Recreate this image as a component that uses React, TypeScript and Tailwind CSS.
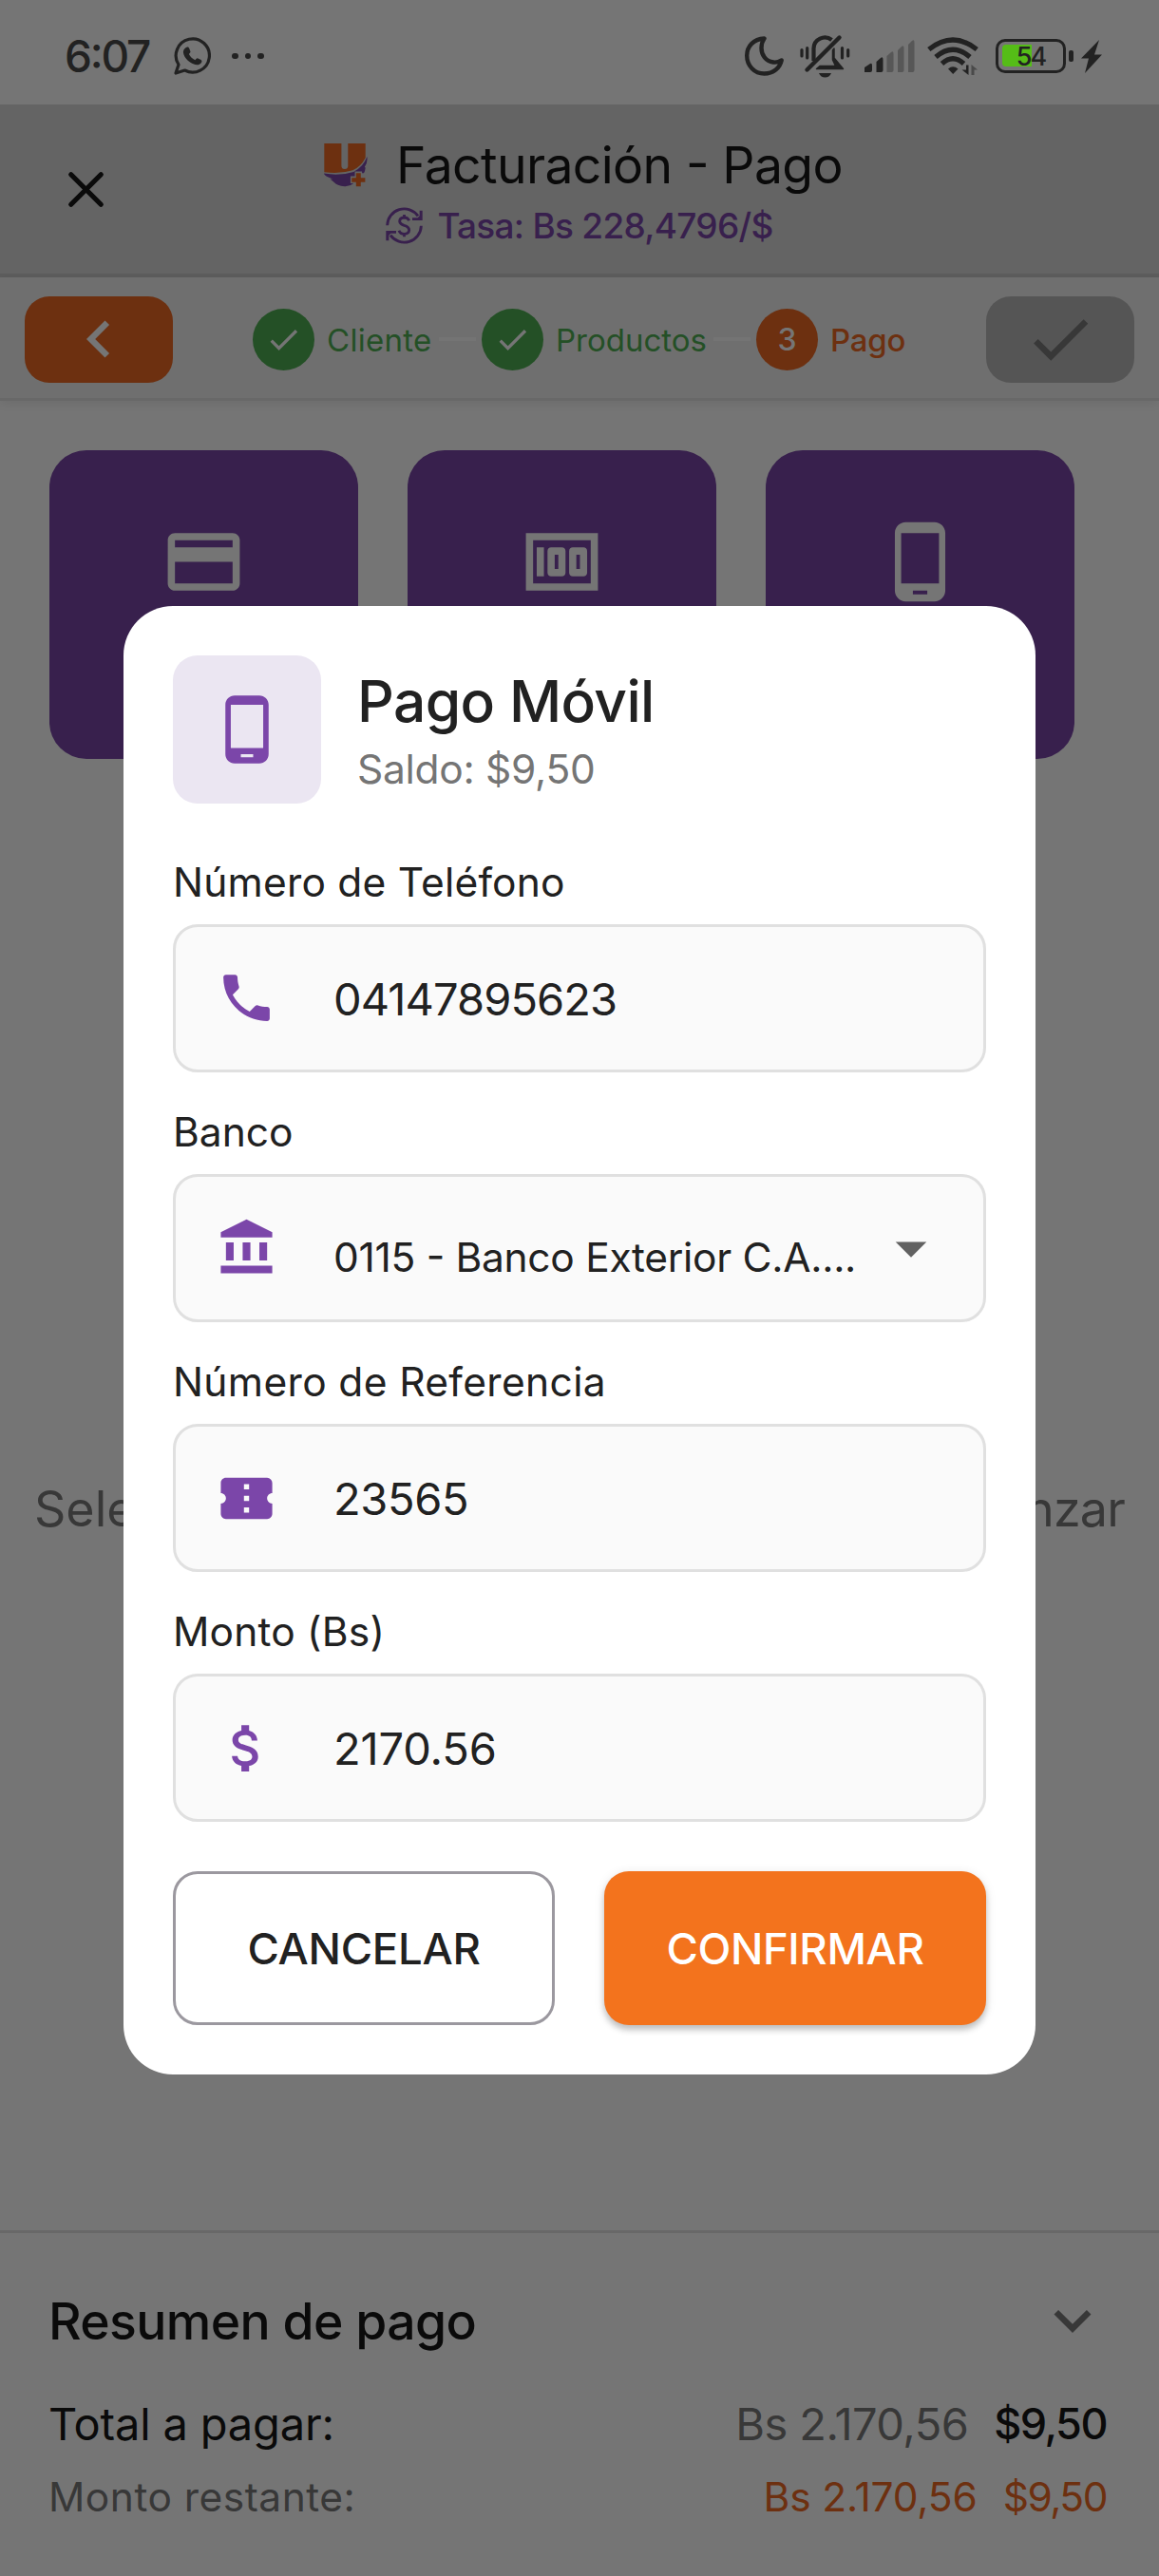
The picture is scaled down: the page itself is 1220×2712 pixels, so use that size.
import type { ReactNode } from "react";
import {
  MdArrowDropDown,
  MdAttachMoney,
  MdCheck,
  MdChevronLeft,
  MdConfirmationNumber,
  MdCreditCard,
  MdExpandMore,
  MdMoney,
  MdPhone,
  MdPhoneAndroid,
} from "react-icons/md";

function WhatsAppIcon() {
  return (
    <svg viewBox="0 0 39 40" className="ml-[26px] h-[40px] w-[39px]" fill="none">
      <path d="M2 38 5 29A17.6 17.6 0 1 1 11.5 35Z" stroke="#222" strokeWidth="3.2" strokeLinejoin="round" />
      <path
        d="M12.5 11.2c1.6-1.2 3-.9 3.6.6l1.3 3.2c.5 1.2-.8 2-1.5 3 1.5 3 3.6 4.900 6.500 6.200 1-1 1.700-2.400 3-1.800l3.200 1.600c1.200.8 1 2.400 0 3.500-2 2.200-4.800 2.300-8.200.8C14.500 25.800 11 21.500 10 16.800c-.5-2.300.9-4.600 2.500-5.600Z"
        fill="#222"
      />
    </svg>
  );
}

function MoonIcon() {
  return (
    <svg viewBox="0 0 41 42" className="h-[42px] w-[41px]" fill="none" stroke="#222" strokeWidth="4.400" strokeLinejoin="round">
      <path d="M20.500 2.500C9 3 2.200 11 2.200 20.500C2.200 31 10 39.500 20.500 39.500C30 39.500 37 33.500 38.700 25.500C36 27 33 28 30 27.500C22 26.500 17.500 20 17.500 12.500C17.500 8.500 18.700 5 20.500 2.500Z" />
    </svg>
  );
}

function BellOffIcon() {
  return (
    <svg viewBox="0 0 53 46" className="ml-[17px] h-[46px] w-[53px]" fill="none" stroke="#222">
      <g strokeWidth="3.2" strokeLinecap="round">
        <path d="M2 16.500V23M7.700 14.500V25M44.500 14.500V25M50.700 16.500V23" />
      </g>
      <path d="M14.500 28V15A11.700 11.700 0 0 1 33.500 6" strokeWidth="4.200" />
      <path d="M7.500 37.500 41.500 3.500" strokeWidth="4.400" strokeLinecap="round" />
      <path d="M36 15V25L45.500 36.500H17.500L21 33.500H37.500L34.500 27V17Z" fill="#222" strokeWidth="1.500" strokeLinejoin="round" />
      <path d="M20 41H33Q31 45.500 26.500 45.500T20 41Z" fill="#222" stroke="none" />
    </svg>
  );
}

function SignalIcon() {
  return (
    <svg viewBox="0 0 53 46" className="ml-[15px] h-[46px] w-[53px]">
      <path d="M0 40V35L6 31Q8 30 8 33V38Q8 40 6 40Z" fill="#222" />
      <path d="M12.500 40V29L17 25Q19.500 23 19.500 27V38Q19.500 40 17.500 40Z" fill="#222" />
      <path d="M23.500 40V23L28 19Q30.500 17 30.500 21V38Q30.500 40 28.500 40Z" fill="#575757" />
      <path d="M35 40V17L39 13Q41.500 11 41.500 15V38Q41.500 40 39.500 40Z" fill="#575757" />
      <path d="M46 40V11L50 7Q52.500 5 52.500 9V38Q52.500 40 50.500 40Z" fill="#575757" />
    </svg>
  );
}

function WifiIcon() {
  return (
    <svg viewBox="0 0 55 40" className="ml-[13px] h-[40px] w-[55px]" fill="none" stroke="#222" strokeWidth="5.200">
      <path d="M1.800 13Q27 -7 52.200 13" />
      <path d="M9 21Q27 5.500 45 21" />
      <path d="M15.500 28Q27 17.500 38.500 28" />
      <path d="M22 33.500Q27 29 32.500 33.500L27.200 39Z" fill="#222" stroke="none" />
      <path d="M41 29.500H43.500V40L36.500 34.500H41Z" fill="#222" stroke="none" />
      <path d="M46.500 40V29L53 34.500H49.500V40Z" fill="#4a4a4a" stroke="none" />
    </svg>
  );
}

function StatusBar() {
  return (
    <div className="flex h-[110px] items-center bg-[#757575] pl-[68px] pr-[60px] pt-[8px]">
      <span className="w-[89px] whitespace-nowrap text-[46px] font-medium leading-none tracking-[-2.2px] text-[#222]">6:07</span>
      <WhatsAppIcon />
      <div className="ml-[22px] flex gap-[7px]">
        <i className="size-[6.500px] rounded-full bg-[#222]" />
        <i className="size-[6.500px] rounded-full bg-[#222]" />
        <i className="size-[6.500px] rounded-full bg-[#222]" />
      </div>
      <div className="flex-1" />
      <MoonIcon />
      <BellOffIcon />
      <SignalIcon />
      <WifiIcon />
      <div className="relative ml-[17px] flex h-[36px] w-[74px] items-center justify-center rounded-[10px] border-[3.500px] border-[#222]">
        <div className="absolute left-[4px] top-[3px] h-[23px] w-[31px] rounded-l-[4px] bg-[#55bd17]" />
        <span className="relative text-[27px] font-medium leading-none tracking-[-2px] text-[#222]">54</span>
      </div>
      <i className="ml-[3px] h-[12px] w-[5px] rounded-[2px] bg-[#222]" />
      <svg viewBox="0 0 22 35" className="ml-[8px] h-[35px] w-[22px]" fill="#222">
        <path d="M19 0 0 19.500H8L4 35 22 15.500H14Z" />
      </svg>
    </div>
  );
}

function Logo() {
  return (
    <svg viewBox="0 0 140 141" className="h-[47px] w-[46px]">
      <path d="M1 2H56V74C56 80 60 84 66.500 84C73 84 77 80 77 74V2H133V48Q118 78 92 88Q50 101 1 94Z" fill="#6d3010" />
      <path
        d="M0 98Q50 107 95 93Q126 78 138 45Q141 62 130 78L133 80Q132 90 128 97H122V92H99V107H85V130H95Q82 141 66 140Q42 138 32 126L20 116H28L14 110Q2 106 0 98Z"
        fill="#38204d"
      />
      <path d="M103 97H118V112H132V126H118V140H103V126H89V112H103Z" fill="#6d3010" />
    </svg>
  );
}

function ExchangeIcon() {
  return (
    <svg viewBox="0 0 117 117" className="h-[39px] w-[39px]" fill="none" stroke="#38204d" strokeWidth="8.500">
      <path d="M5 58A53.500 53.500 0 0 1 102 28" />
      <path d="M112 59A53.500 53.500 0 0 1 15 89" />
      <path d="M107 11H116V42H84V34H101L107 28Z" fill="#38204d" stroke="none" />
      <path d="M10 106H1V75H33V83H16L10 89Z" fill="#38204d" stroke="none" />
      <path d="M74 43Q70 33 58.500 33Q44 34 44 45Q45 54 58.500 58Q74 62 74 73Q73 84 58.500 85Q46 85 42 74M58.500 24V33M58.500 84V94" />
    </svg>
  );
}

/* Hyphen aligned to the middle of the capitals. */
function CapDash() {
  return <span className="[font-feature-settings:'case'_1]">-</span>;
}

function Header() {
  return (
    <div className="grid h-[182px] grid-cols-[183px_1fr_183px] border-b-[4px] border-[#5d5d5d] bg-[#646464]">
      <div className="pl-[59px] pt-[58px]">
        <svg viewBox="0 0 24 24" className="size-[63px]" stroke="#0a0a0a" strokeWidth="2" strokeLinecap="round">
          <path d="M6 6 18 18M18 6 6 18" />
        </svg>
      </div>
      <div className="flex flex-col items-center pt-[31.500px]">
        <div className="flex h-[64px] items-center gap-[30px] pl-[8px]">
          <Logo />
          <span className="whitespace-nowrap text-[53.500px] leading-[64px] tracking-[-0.63px] text-[#0a0a0a]">
            Facturación <CapDash /> Pago
          </span>
        </div>
        <div className="flex h-[64px] items-center gap-[15px]">
          <ExchangeIcon />
          <span className="whitespace-nowrap text-[37px] font-medium leading-[64px] tracking-[-0.73px] text-[#38204d]">
            Tasa: Bs 228,4796/$
          </span>
        </div>
      </div>
    </div>
  );
}

function StepBar() {
  return (
    <div className="relative flex h-[130px] items-center border-b-[3px] border-[#686868] bg-[#6f6f6f] px-[26px] pt-[3px] shadow-[0_3px_10px_rgba(0,0,0,0.07)]">
      <div className="flex h-[91px] w-[156px] items-center justify-center rounded-[26px] bg-[#6d3010]">
        <MdChevronLeft className="size-[78px] text-[#757575]" />
      </div>
      <div className="flex flex-1 items-center pl-[84px]">
        <div className="flex size-[65px] items-center justify-center rounded-full bg-[#245026]">
          <MdCheck className="size-[39px] text-[#757575]" />
        </div>
        <span className="ml-[13px] w-[111px] whitespace-nowrap pt-[3px] text-[33px] tracking-[0.28px] text-[#245026]">Cliente</span>
        <i className="ml-[7px] h-[4px] w-[39px] bg-[#747474]" />
        <div className="ml-[6px] flex size-[65px] items-center justify-center rounded-full bg-[#245026]">
          <MdCheck className="size-[39px] text-[#757575]" />
        </div>
        <span className="ml-[13px] w-[160px] whitespace-nowrap pt-[3px] text-[33px] text-[#245026]">Productos</span>
        <i className="ml-[6px] h-[4px] w-[39px] bg-[#747474]" />
        <div className="ml-[6px] flex size-[65px] items-center justify-center rounded-full bg-[#6d3010] pt-[2px] text-[32px] font-medium text-[#757575]">
          3
        </div>
        <span className="ml-[13px] whitespace-nowrap pt-[3px] text-[33px] font-medium tracking-[-0.24px] text-[#6d3010]">Pago</span>
      </div>
      <div className="flex h-[91px] w-[156px] items-center justify-center rounded-[26px] bg-[#555]">
        <MdCheck className="size-[78px] text-[#383838]" />
      </div>
    </div>
  );
}

function MethodCard({ children }: { children: ReactNode }) {
  return <div className="flex size-[325px] justify-center rounded-[39px] bg-[#38204d] pt-[72px] text-[91px] text-[#757575]">{children}</div>;
}

function BankIcon() {
  return (
    <svg viewBox="0 0 24 24" fill="currentColor" className="size-[65px]">
      <path d="M12 1 2 6v2h20V6zM4 10h3v7H4zM10.500 10h3v7h-3zM17 10h3v7h-3zM2 19h20v3H2z" />
    </svg>
  );
}

function Field({ label, icon, children }: { label: ReactNode; icon: ReactNode; children: ReactNode }) {
  return (
    <div className="flex flex-col gap-[18px]">
      <div className="h-[53px] whitespace-nowrap text-[42.500px] leading-[53px]">{label}</div>
      <div className="flex h-[156px] items-center rounded-[26px] border-[3px] border-[#e0e0e0] bg-[#fafafa] pl-[42px] pr-[37px]">
        <span className="text-[65px] text-[#7b46a9]">{icon}</span>
        <div className="ml-[59px] flex flex-1 items-center whitespace-nowrap">{children}</div>
      </div>
    </div>
  );
}

function PaymentDialog() {
  return (
    <div className="absolute inset-0 flex items-center justify-center pt-[110px]">
      <div className="w-[960px] rounded-[52px] bg-white p-[52px] text-[#212121]">
        <div className="flex">
          <div className="flex size-[156px] items-center justify-center rounded-[26px] bg-[#ebe6f2]">
            <MdPhoneAndroid className="size-[78px] text-[#7b46a9]" />
          </div>
          <div className="ml-[38px] flex flex-col pt-[8px]">
            <span className="text-[60.500px] font-medium leading-[80px] tracking-[-0.63px]">Pago Móvil</span>
            <span className="text-[42.500px] leading-[63px] tracking-[-0.29px] text-[#757575]">Saldo: $9,50</span>
          </div>
        </div>
        <div className="mt-[56px] flex flex-col gap-[36.250px]">
          <Field label={<span className="tracking-[0.2px]">Número de Teléfono</span>} icon={<MdPhone />}>
            <span className="pt-[2px] text-[47px] leading-[60px] tracking-[-0.9px]">04147895623</span>
          </Field>
          <Field label="Banco" icon={<BankIcon />}>
            <span className="flex-1 pt-[20px] text-[42.500px] leading-[60px] tracking-[-0.31px]">
              0115 <CapDash /> Banco Exterior C.A....
            </span>
            <MdArrowDropDown className="size-[78px] text-[#616161]" />
          </Field>
          <Field label={<span className="tracking-[0.35px]">Número de Referencia</span>} icon={<MdConfirmationNumber />}>
            <span className="pt-[2px] text-[47px] leading-[60px] tracking-[-0.35px]">23565</span>
          </Field>
          <Field label={<span className="tracking-[0.2px]">Monto (Bs)</span>} icon={<MdAttachMoney />}>
            <span className="pt-[2px] text-[47px] leading-[60px] tracking-[-0.15px]">2170.56</span>
          </Field>
        </div>
        <div className="mt-[52px] grid grid-cols-2 gap-[52px] text-[45.500px] font-medium">
          <button className="h-[162px] rounded-[26px] border-[3px] border-[#9b989f] pt-[2px] tracking-[-0.26px]">CANCELAR</button>
          <button className="h-[162px] rounded-[26px] bg-[#f3731d] pt-[2px] tracking-[-0.39px] text-white shadow-[0_5px_6px_rgba(0,0,0,0.2),0_2px_12px_rgba(0,0,0,0.1)]">
            CONFIRMAR
          </button>
        </div>
      </div>
    </div>
  );
}

function Summary() {
  return (
    <div className="border-t-[3px] border-[#686868] pl-[51px] pr-[55px] pt-[53px] text-[#0a0a0a]">
      <div className="flex h-[78px] items-center justify-between">
        <span className="pt-[2px] text-[53.500px] font-medium tracking-[-0.65px]">Resumen de pago</span>
        <MdExpandMore className="-mr-[3px] size-[78px] text-[#383838]" />
      </div>
      <div className="mt-[39.500px] flex h-[60px] items-center text-[47px] leading-[60px]">
        <span className="flex-1 tracking-[-0.16px]">Total a pagar:</span>
        <span className="tracking-[-0.53px] text-[#383838]">Bs 2.170,56</span>
        <span className="ml-[27px] text-[45px] font-medium tracking-[-1.5px]">$9,50</span>
      </div>
      <div className="mt-[20px] flex h-[54px] items-center text-[42.500px] leading-[54px] text-[#6d3010]">
        <span className="flex-1 tracking-[0.48px] text-[#383838]">Monto restante:</span>
        <span className="tracking-[-0.16px]">Bs 2.170,56</span>
        <span className="ml-[27px] tracking-[-1.51px]">$9,50</span>
      </div>
    </div>
  );
}

export default function App() {
  return (
    <div className="relative flex h-[2712px] w-[1220px] flex-col overflow-hidden bg-[#757575] font-['Inter',sans-serif] [font-feature-settings:'calt'_1]">
      <StatusBar />
      <Header />
      <StepBar />
      <div className="flex h-[1926px] flex-col px-[36px] pt-[52px]">
        <div className="flex gap-[52px] pl-[16px]">
          <MethodCard>
            <MdCreditCard />
          </MethodCard>
          <MethodCard>
            <MdMoney />
          </MethodCard>
          <MethodCard>
            <MdPhoneAndroid />
          </MethodCard>
        </div>
        <div className="mt-[754px] flex h-[72px] justify-between whitespace-nowrap text-[52px] leading-[72px] text-[#383838]">
          <span>Seleccione</span>
          <span className="tracking-[-0.8px]">avanzar</span>
        </div>
      </div>
      <Summary />
      <PaymentDialog />
    </div>
  );
}
